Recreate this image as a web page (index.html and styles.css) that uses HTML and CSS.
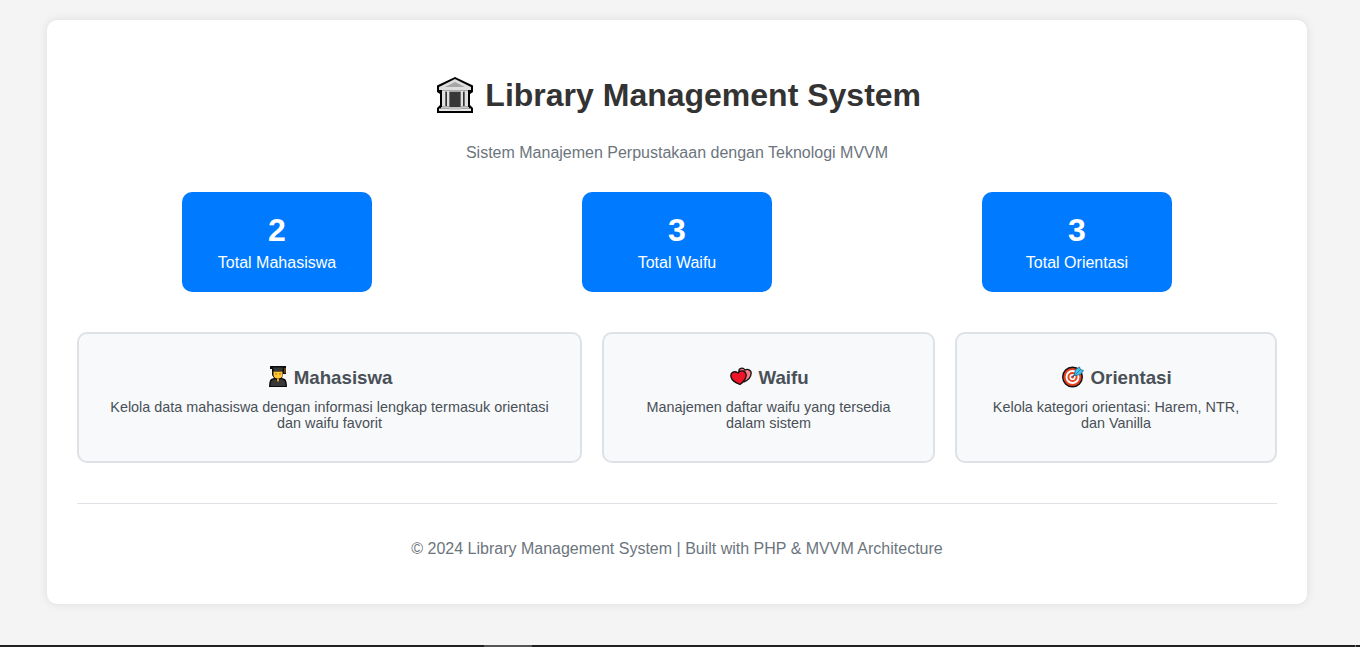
FILE: index.html
```html
<!DOCTYPE html>
<html lang="id">
<head>
<meta charset="utf-8">
<title>Library Management System</title>
<link rel="stylesheet" href="styles.css">
</head>
<body>
<main class="container">
  <header class="header">
    <h1><svg class="icon-lg" viewBox="0 0 36 36"><path d="M18 0 36 8.500V15L33 17V28L36 31V36H0V31L3 28V17L0 15V8.500Z" fill="#000"/><path d="M18 2 34 10v3H2v-3Z" fill="#dedede"/><path d="M18 5 28 10H8Z" fill="#a6a6a6"/><path d="M5 13h26v17H5z" fill="#a9a9a9"/><path d="M8.500 15h1.500v14H8.500zM26 15h1.500v14H26z" fill="#333"/><path d="M12.500 15h11v15h-11z" fill="#383838"/><path d="M5 14h3v15H5zM10 14h2v15h-2zM24 14h2v15h-2zM28 14h3v15h-3z" fill="#e0e0e0"/><path d="M4 30h28v1.500H4z" fill="#c4c4c4"/><path d="M2 31.500h32V34H2z" fill="#e8e8e8"/><path d="M12 30h12v2.500H12z" fill="#c2c2c2"/></svg> Library Management System</h1>
    <p>Sistem Manajemen Perpustakaan dengan Teknologi MVVM</p>
  </header>
  <section class="stats">
    <div class="stat"><div class="number">2</div><div>Total Mahasiswa</div></div>
    <div class="stat"><div class="number">3</div><div>Total Waifu</div></div>
    <div class="stat"><div class="number">3</div><div>Total Orientasi</div></div>
  </section>
  <nav class="menu">
    <a class="card">
      <h3><svg class="icon icon-student" viewBox="0 0 22 22"><path d="M3 0h16v8h-3l-1 4 3 1q2 2 2 8H2q0-6 2-8l3-1-2-3V3H3Z" fill="#0c0c0c"/><path d="M6.500 5.500h9V9q-.5 3.500-4.500 3.500T6.500 9Z" fill="#ffc735"/><path d="M6 1.500h10l-1 3.800H7Z" fill="#363636"/><path d="M8.500 7.500h1v1h-1zM12.500 7.500h1v1h-1z" fill="#4b2b08"/><path d="M18 2v5" stroke="#b8792a"/><path d="M3.500 20q0-5 2-6l3-1 2.500 3 2.500-3 3 1q2 1 2 6Z" fill="#383838"/><path d="M10 12.500h2V15l-1 1-1-1Z" fill="#e8a623"/></svg> Mahasiswa</h3>
      <p>Kelola data mahasiswa dengan informasi lengkap termasuk orientasi dan waifu favorit</p>
    </a>
    <a class="card">
      <h3><svg class="icon" viewBox="0 0 22 22"><path d="M9 6C8 2 13 1 15 4c3-2 7 1 6 4 0 3-3 6-7 8Z" fill="#f47b82" stroke="#111" stroke-width="1.300"/><path d="M10 18.500C6 17 2 15 1 11c-1-4 3-7 7-4 2-3 7-3 8 1 1 3-2 8-6 10.500Z" fill="#ef1529" stroke="#111" stroke-width="1.300"/></svg> Waifu</h3>
      <p>Manajemen daftar waifu yang tersedia dalam sistem</p>
    </a>
    <a class="card">
      <h3><svg class="icon" viewBox="0 0 22 22"><circle cx="10.500" cy="11" r="9.800" fill="#e8411f" stroke="#111" stroke-width="1.400"/><circle cx="10.500" cy="11" r="6" fill="#e8411f" stroke="#fff" stroke-width="1.900"/><circle cx="10.500" cy="11" r="2.300" fill="#e8411f" stroke="#fff" stroke-width="1.600"/><path d="m10.500 11 4-4" stroke="#155d7c" stroke-width="1.300"/><path d="m12.500 8 1-4.500L17.500 1l1 2.500 3 1-3 4-5 1Z" fill="#45c1ee" stroke="#155d7c" stroke-width=".7"/><path d="m14 8 4.500-4.500" stroke="#167fa8" stroke-width=".8"/></svg> Orientasi</h3>
      <p>Kelola kategori orientasi: Harem, NTR, dan Vanilla</p>
    </a>
  </nav>
  <footer class="footer">© 2024 Library Management System | Built with PHP &amp; MVVM Architecture</footer>
</main>
<div class="taskbar"><span class="taskbar-active"></span><span class="taskbar-end"></span></div>
</body>
</html>
```
FILE: styles.css
```css
* { box-sizing: border-box; }
body {
  display: flex;
  flex-direction: column;
  justify-content: space-between;
  height: 647px;
  margin: 0;
  padding-top: 20px;
  overflow: hidden;
  background: #f4f4f4;
  font-family: Arial, "Liberation Sans", sans-serif;
  font-size: 16px;
}
.container {
  width: 1260px;
  height: 584px;
  margin-left: 47px;
  padding: 30px;
  background: #fff;
  border-radius: 10px;
  box-shadow: 0 0 10px rgba(0, 0, 0, .1);
}
.header { height: 142px; text-align: center; }
h1 {
  margin: 0;
  padding-top: 26px;
  color: #333;
  font-size: 32px;
  line-height: 38px;
}
.icon-lg { width: 38px; height: 36px; margin: 0 2.5px 0 3px; vertical-align: -7px; }
.header p { margin: 30px 0 0; color: #6c757d; line-height: 18px; }
.stats { display: flex; justify-content: space-around; }
.stat {
  width: 190px;
  height: 100px;
  padding: 20px;
  border-radius: 10px;
  background: #007bff;
  color: #fff;
  line-height: 18px;
  text-align: center;
}
.number { margin-bottom: 6px; font-size: 32px; font-weight: bold; line-height: 36px; }
.menu {
  display: grid;
  grid-template-columns: 505px 333px 322px;
  gap: 20px;
  margin-top: 40px;
}
.card {
  height: 131px;
  padding: 31px 30px 29px;
  border: 2px solid #dee2e6;
  border-radius: 10px;
  background: #f8f9fa;
  color: #495057;
  text-align: center;
}
h3 { margin: 0 0 9px; font-size: 18.72px; line-height: 25px; }
.icon { width: 22px; height: 22px; margin: 0 1px 0 2px; vertical-align: -4px; }
.icon-student { margin: 0; }
.card p { margin: 0; font-size: 14.4px; line-height: 16px; }
.footer {
  margin-top: 40px;
  padding-top: 36px;
  border-top: 1px solid #dee2e6;
  color: #6c757d;
  line-height: 18px;
  text-align: center;
}
.taskbar { display: flex; height: 2px; padding-left: 484px; background: #211f20; }
.taskbar-active { width: 48px; background: #555; }
.taskbar-end { width: 1px; margin-left: 823px; background: #777; }
```
